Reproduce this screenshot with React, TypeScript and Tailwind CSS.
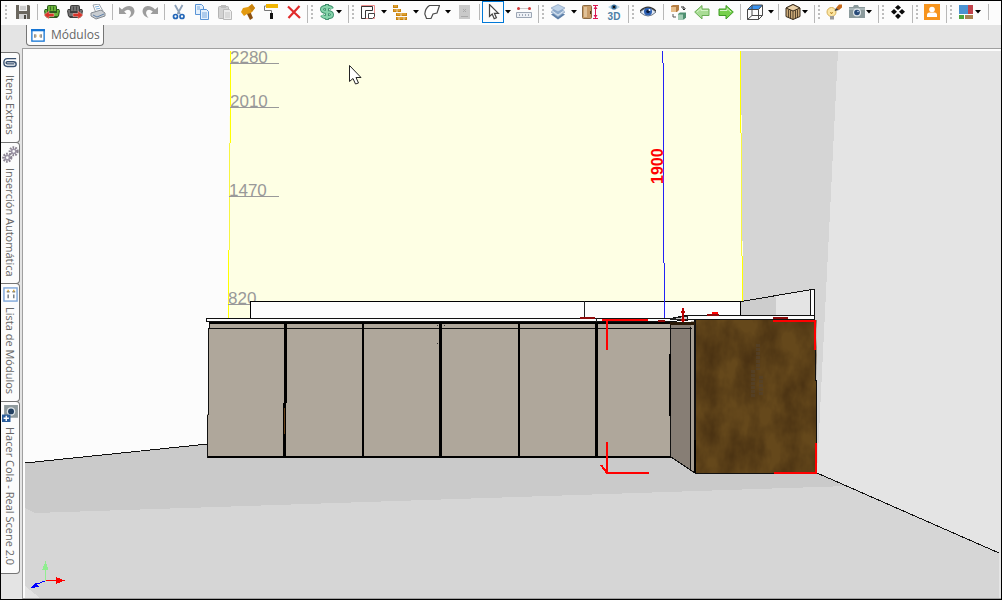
import React from 'react';

type IconProps = { size?: number; className?: string; children: React.ReactNode };

function Icon({ size = 16, className = '', children }: IconProps) {
  return (
    <svg width={size} height={size} viewBox="0 0 16 16" className={`shrink-0 ${className}`} fill="none" aria-hidden="true">
      {children}
    </svg>
  );
}

const SaveIcon = () => (
  <Icon>
    <path d="M1 1h13l1 1v13H1z" fill="#6b675f" />
    <path d="M4 1h8v6H4z" fill="#f2f2f2" />
    <path d="M5 3h6M5 5h6" stroke="#a8a8a8" />
    <path d="M4 10h8v5H4z" fill="#d4d4d4" />
    <path d="M9 11h2v4H9z" fill="#4c4943" />
  </Icon>
);

const SofaIcon = ({ color, dark, flip }: { color: string; dark: string; flip?: boolean }) => (
  <Icon>
    <path d="M3 3q0-2 2-2h6q2 0 2 2v2h2l1 2-1 5-2 2H3l-2-2-1-5 1-2h2z" fill={dark} />
    <path d="M4 3q0-1 1-1h6q1 0 1 1v4H4zM1 6h2v3h10V6h2l-1 6H2z" fill={color} />
    <path d="M6.500 2.500v4M9.500 2.500v4M4 8h8" stroke={dark} strokeWidth=".8" />
    <path
      d={flip ? 'M16 11 11 7v2.500H6v3h5V15z' : 'M0 11l5-4v2.500h5v3H5V15z'}
      fill="#d9342b"
      stroke="#f3c0bb"
      strokeWidth=".5"
    />
  </Icon>
);

const PrintIcon = () => (
  <Icon>
    <path d="M3 1l6-1 4 7-7 2z" fill="#fff" stroke="#9aa3ad" />
    <path d="M1 9l10-3 4 3v3l-9 3-5-3z" fill="#c9cdd1" stroke="#858b92" />
    <path d="M3 11l4 2 7-3" stroke="#5d7fa8" />
    <path d="M5 3l4-.7M6 5l4-.7" stroke="#7fb0dc" />
  </Icon>
);

const UndoIcon = ({ flip }: { flip?: boolean }) => (
  <Icon className={flip ? '-scale-x-100' : ''}>
    <path d="M0 3v7h7.500L5.200 7.600Q8.500 4.500 11 6.500q2.500 2.500-1.500 7.500 6-2 6-7Q15 2.500 10.500 2 6 1.800 3 5.500z" fill="#9d9d9d" />
  </Icon>
);

const CutIcon = () => (
  <Icon>
    <path d="M4 1l5 9M11.500 1 6.500 10" stroke="#8ca0b8" strokeWidth="1.8" />
    <circle cx="4.500" cy="12.500" r="2" stroke="#2467b8" strokeWidth="1.7" />
    <circle cx="11" cy="12.500" r="2" stroke="#2467b8" strokeWidth="1.7" />
  </Icon>
);

const CopyIcon = ({ line, fill }: { line: string; fill: string }) => (
  <Icon>
    <path d="M1.500.500h6l2 2v8h-8z" fill={fill} stroke={line} />
    <path d="M6.500 5.500h6l2 2v8h-8z" fill={fill} stroke={line} />
    <path d="M8 9h5M8 11h5M8 13h5M3 3h3M3 5h3" stroke={line} strokeWidth=".8" />
  </Icon>
);

const PasteIcon = () => (
  <Icon>
    <rect x="1.500" y="2.500" width="10" height="12" rx="1" fill="#d2d2d2" stroke="#b4b4b4" />
    <rect x="4" y="1" width="5" height="3" fill="#bcbcbc" />
    <path d="M6.500 5.500h6l2 2v8h-8z" fill="#ececec" stroke="#b9b9b9" />
    <path d="M8 9h5M8 11h5M8 13h5" stroke="#c6c6c6" />
  </Icon>
);

const HammerIcon = () => (
  <Icon>
    <path d="M6 8l4-1 3 7-3 2z" fill="#8a4f10" />
    <path d="M1 8l2-4 5-1 4-3 3 4-4 5-4 1-3 2z" fill="#e39a10" />
    <path d="M12 0l3 4-3 4-3-5z" fill="#c98310" />
  </Icon>
);

const RollerIcon = () => (
  <Icon>
    <rect x="3" y="0" width="12" height="4" fill="#f0b400" />
    <path d="M3 2H1.500v4.500h7V9" stroke="#777" />
    <rect x="7" y="9" width="3" height="6" fill="#111" />
  </Icon>
);

const DeleteIcon = () => (
  <Icon>
    <path d="M2 2.500l12 11.500M13.500 2 2.500 14" stroke="#e02b2b" strokeWidth="2.200" />
  </Icon>
);

const DollarIcon = () => (
  <Icon>
    <path
      d="M13 4.800Q12 2.800 8 2.800q-5 0-5 2.500Q3 8 8 8t5 2.700q0 2.500-5 2.500-4 0-5-2M8 0v16"
      stroke="#3b8f6a"
      strokeWidth="4"
    />
    <path
      d="M13 4.800Q12 2.800 8 2.800q-5 0-5 2.500Q3 8 8 8t5 2.700q0 2.500-5 2.500-4 0-5-2M8 1v14"
      stroke="#86d3ab"
      strokeWidth="2.200"
    />
  </Icon>
);

const WallsIcon = () => (
  <Icon>
    <path d="M1.500 1.500h13v13h-13z" stroke="#ef8f8f" />
    <path d="M1.500 14.500v-12h11v4h-7v8z" stroke="#333" />
    <path d="M8.500 14.500v-5h6v3l-2 2z" stroke="#444" fill="#fff" />
  </Icon>
);

const BricksIcon = () => (
  <Icon>
    <path d="M1 1h5v3H1zM1 5h8v3H1zM4 9h11v3H4zM4 13h11v3H4z" fill="#c8830c" />
    <path d="M2 2h3M2 6h2M6 6h2M5 10h3M10 10h4M5 14h1M8 14h3M13 14h1" stroke="#f1b955" />
    <path d="M5 5v3M9 9v3M7 13v3M12 13v3" stroke="#fff" strokeWidth=".8" />
  </Icon>
);

const ShapeIcon = () => (
  <Icon>
    <path d="M5.500 1.500h10L13 9l-4 1-2 4.500H2.500L.800 10q.500-6 4.700-8.500z" fill="#fff" stroke="#4a4a4a" strokeWidth="1.200" />
  </Icon>
);

const DisabledIcon = () => (
  <Icon>
    <rect x="3" y="1" width="11" height="14" fill="#c9c9c9" />
    <path d="M7 5l3 3M10 5 7 8M5 12.500h7" stroke="#a9a9a9" />
  </Icon>
);

const PointerIcon = () => (
  <Icon>
    <path d="M4.500.500v12l2.700-2.500 2 4.800 2.200-1-2-4.500h4z" fill="#fff" stroke="#444" strokeWidth="1.200" />
  </Icon>
);

const RulerIcon = () => (
  <Icon>
    <path d="M.500 8.500h15v5H.500z" fill="#eef1f6" stroke="#9ca6b4" />
    <path d="M3 11h1M6 11h1M9 11h1M12 11h1" stroke="#59677c" />
    <path d="M3 4.500h10" stroke="#c9c9c9" />
    <circle cx="2.500" cy="4.500" r="1.500" fill="#d23a3a" />
    <circle cx="13.500" cy="4.500" r="1.500" fill="#d23a3a" />
  </Icon>
);

const LayersIcon = () => (
  <Icon>
    <path d="M8 7l7 3.500L8 15.500l-7-5z" fill="#5d7fa8" />
    <path d="M8 5l7 3-7 5-7-5z" fill="#b5cbe3" stroke="#7894b5" strokeWidth=".6" />
    <path d="M8 3l7 3-7 5-7-5z" fill="#8eabcc" stroke="#fff" strokeWidth=".6" />
    <path d="M8 .500l7 3.500-7 4-7-4z" fill="#bdd2e8" stroke="#7894b5" strokeWidth=".6" />
  </Icon>
);

const DoorIcon = () => (
  <Icon>
    <rect x=".500" y="1.500" width="9" height="13" rx="1" fill="#c79b67" stroke="#896a43" />
    <path d="M2 3h3v10H2z" fill="#e0c197" />
    <path d="M8.500 7v3" stroke="#4c3516" />
    <path d="M11 1.500h5M11 14.500h5M13.500 1v14" stroke="#dd1852" />
    <path d="M11.500 5 13.500 2l2 3zM11.500 11l2 3 2-3z" fill="#dd1852" />
  </Icon>
);

const View3DIcon = () => (
  <svg width="16" height="18" viewBox="0 0 16 18" className="shrink-0" aria-hidden="true">
    <path d="M2 4q6-5 12 0-6 5-12 0z" fill="#b9d6e8" />
    <circle cx="8" cy="4" r="2.600" fill="#3a6f9c" />
    <circle cx="8" cy="4" r="1.200" fill="#111" />
    <text x="8" y="17" fontSize="10" fontWeight="bold" textAnchor="middle" fill="#4e7fa6" className="font-['Liberation_Sans',sans-serif]">
      3D
    </text>
  </svg>
);

const EyeIcon = () => (
  <Icon>
    <path d="M0 8q8-8 16 0-8 8-16 0z" fill="#dfe7f2" stroke="#6c7888" />
    <circle cx="8" cy="7.500" r="4" fill="#2d60b3" />
    <circle cx="8" cy="7.500" r="1.800" fill="#0b1c40" />
    <circle cx="9.500" cy="6" r="1" fill="#fff" />
    <path d="M0 7q8-8 16 0" stroke="#333" strokeWidth="1.200" />
  </Icon>
);

const SwapIcon = () => (
  <Icon>
    <path d="M1 2l2-1h6v5L7 8H1z" fill="#b57d42" />
    <path d="M1 3h5v5H1z" fill="#e6bd88" />
    <path d="M8 10l2-1.500h6v5L14 15.500H8z" fill="#4f8f72" />
    <path d="M8 10.500h5v5H8z" fill="#a2cdb4" />
    <path d="M11 3h3v3M12.500 4.500 14 6l1.500-1.500" stroke="#222" />
    <path d="M3 10v3h3" stroke="#555" />
  </Icon>
);

const ArrowIcon = ({ flip }: { flip?: boolean }) => (
  <Icon className={flip ? '-scale-x-100' : ''}>
    <path d="M.700 8 8 1.500v3.500h7v6.500H8V15z" fill={flip ? '#76d04c' : '#a9dc95'} stroke={flip ? '#3f9c25' : '#6aad55'} />
    <path d="M3 8l4-3.500v2h7" stroke="#d4f3c7" />
  </Icon>
);

const WireCubeIcon = () => (
  <Icon>
    <path d="M5 1h11l-4 4H1z" fill="#3a93f0" />
    <path d="M.500 5.500h11v10H.500zM11.500 5.500l4-4.500v10.500l-4 4M.500 5.500 5 1v10.500h10.500M5 11.500l-4.500 4M5 1h10.500" stroke="#4a4a4a" />
  </Icon>
);

const BoxIcon = () => (
  <Icon>
    <path d="M8 .500l7 3.500v8.500L8 15.500l-7-3V4z" fill="#c9a877" stroke="#3a2d1c" />
    <path d="M8 .500l7 3.500-7 3-7-3z" fill="#ead1a8" stroke="#3a2d1c" />
    <path d="M8 7v8.500M3.500 5.500v8M5.500 6.200v8M10.500 6.200v8M12.500 5.500v8" stroke="#3a2d1c" strokeWidth=".8" />
  </Icon>
);

const BulbIcon = () => (
  <Icon>
    <circle cx="5.500" cy="8" r="4.500" fill="#fbe5a4" stroke="#d5b059" />
    <path d="M4 12h4v3.500H4z" fill="#999" />
    <path d="M4.500 8l1 2 1-2" stroke="#b98522" />
    <path d="M10 4l3-3.500h3v3L13 6z" fill="#c5691b" />
    <path d="M8.500 7 10 4l3 2z" fill="#333" />
  </Icon>
);

const CameraIcon = () => (
  <Icon>
    <path d="M1 3h3l1-2h4l1 2h6v11H0V3z" fill="#8b9a9c" />
    <rect x="0" y="4" width="16" height="2" fill="#a9b6b8" />
    <circle cx="8" cy="8.500" r="4" fill="#dfe6ea" />
    <circle cx="8" cy="8.500" r="2.800" fill="#284a78" />
    <circle cx="9" cy="7.500" r=".8" fill="#c9ddf5" />
  </Icon>
);

const DiamondsIcon = () => (
  <Icon>
    <path
      d="M8 1l3 2.500L8 6 5 3.500zM4 5l3 2.700L4 10.500 1 7.700zM12 5l3 2.700-3 2.800-3-2.800zM8 9.500l3 2.500-3 3-3-3z"
      fill="#0a0a0a"
    />
  </Icon>
);

const UserIcon = () => (
  <Icon>
    <rect width="16" height="16" fill="#f7941d" />
    <circle cx="8" cy="5.500" r="2.800" fill="#fff" />
    <path d="M3 13V11q0-2.500 2.500-2.500h5Q13 8.500 13 11v2z" fill="#fff" />
  </Icon>
);

const PaletteIcon = () => (
  <Icon>
    <rect x="1" y="1" width="9" height="9" fill="#4b93d1" />
    <rect x="10" y="1" width="5" height="9" fill="#c2434c" />
    <rect x="1" y="11" width="5" height="4" fill="#4ba53c" />
    <rect x="7" y="11" width="8" height="4" fill="#a98150" />
  </Icon>
);

const ClipIcon = () => (
  <Icon size={14}>
    <path d="M15 3H5Q1 3 1 7.500T5 12h7q3 0 3-2.700T12 6.500H5q-1.500 0-1.500 1.200T5 9h8" stroke="#38506f" strokeWidth="1.600" />
  </Icon>
);

const GearsIcon = () => (
  <Icon size={17}>
    <circle cx="11" cy="5" r="3.500" stroke="#8c8592" strokeWidth="2.500" strokeDasharray="1.500 1" />
    <circle cx="11" cy="5" r="2" stroke="#9d95a6" strokeWidth="1.500" />
    <circle cx="5" cy="11" r="3.500" stroke="#8c8592" strokeWidth="2.500" strokeDasharray="1.500 1" />
    <circle cx="5" cy="11" r="2" stroke="#9d95a6" strokeWidth="1.500" />
  </Icon>
);

const ListIcon = () => (
  <Icon size={15}>
    <rect x="1" y="1" width="14" height="14" fill="#fff" stroke="#7ea6d8" strokeWidth="1.500" />
    <path d="M4 5h3M10 5h3M5.500 8v4M11.500 8v4" stroke="#6f7780" strokeWidth="1.500" />
    <path d="M5.500 3v2M11.500 3v2" stroke="#d8a93a" strokeWidth="1.500" />
  </Icon>
);

const QueueIcon = () => (
  <Icon size={17}>
    <path d="M2 0h13v12H2z" fill="#8f9a9d" />
    <circle cx="8.500" cy="6" r="4" fill="#dfe6ea" />
    <circle cx="8.500" cy="6" r="2.800" fill="#223f60" />
    <rect x="0" y="9" width="8" height="7" fill="#2b5d9b" />
    <path d="M4 10v5M1.500 12.500h5" stroke="#fff" strokeWidth="1.300" />
  </Icon>
);

const ModulesIcon = () => (
  <Icon size={14}>
    <rect x="1" y="2" width="14" height="13" fill="#fff" stroke="#1474d4" strokeWidth="1.500" />
    <path d="M0 2.500h16" stroke="#1474d4" strokeWidth="2.500" />
    <path d="M4.500 7v4M11.500 7v4" stroke="#666" strokeWidth="1.500" />
    <path d="M6 7.500v3M10 7.500v3" stroke="#e0bd78" />
  </Icon>
);

function Caret() {
  return (
    <svg width="8" height="4" viewBox="0 0 8 4" className="shrink-0" aria-hidden="true">
      <path d="M1 0h6L4 3.500z" fill="#000" />
    </svg>
  );
}

function Tool({ label, children }: { label: string; children: React.ReactNode }) {
  return (
    <button type="button" aria-label={label} className="flex h-[22px] w-6 shrink-0 items-center justify-center">
      {children}
    </button>
  );
}

function SmallTool({ label, children }: { label: string; children: React.ReactNode }) {
  return (
    <button type="button" aria-label={label} className="flex h-[22px] w-[23px] shrink-0 items-center justify-center">
      {children}
    </button>
  );
}

// icon with a drop-down arrow; the tight one keeps the arrow against the icon
function MenuTool({ label, tight, children }: { label: string; tight?: boolean; children: React.ReactNode }) {
  return (
    <button type="button" aria-label={label} className={`flex h-[22px] shrink-0 items-center ${tight ? 'w-[31px]' : 'w-8'}`}>
      <span className={tight ? 'flex w-5 justify-end' : 'flex w-6 justify-center'}>{children}</span>
      <Caret />
    </button>
  );
}

function Separator() {
  return (
    <div className="flex h-[22px] w-[6px] shrink-0 items-center justify-center">
      <div className="h-4 w-px bg-[#b8b8b8]" />
    </div>
  );
}

function Grip() {
  return (
    <div className="flex w-[3px] flex-col gap-[2px]">
      <i className="size-[2px] bg-[#bdbdbd]" />
      <i className="size-[2px] bg-[#bdbdbd]" />
      <i className="size-[2px] bg-[#bdbdbd]" />
      <i className="size-[2px] bg-[#bdbdbd]" />
    </div>
  );
}

function GroupBreak() {
  return (
    <div className="flex h-[22px] w-[10px] shrink-0 items-center justify-center gap-[3px]">
      <div className="h-[18px] w-px self-end bg-[#b8b8b8]" />
      <Grip />
    </div>
  );
}

function Toolbar() {
  return (
    <div role="toolbar" className="flex h-6 shrink-0 items-start overflow-hidden bg-[#fcfcfc]">
      <div className="flex h-[22px] w-[10px] shrink-0 items-center justify-center"><Grip /></div>
      <SmallTool label="Guardar"><SaveIcon /></SmallTool>
      <Separator />
      <SmallTool label="Importar"><SofaIcon color="#6bb53a" dark="#2d5c1e" /></SmallTool>
      <SmallTool label="Exportar"><SofaIcon color="#747474" dark="#3f3f3f" flip /></SmallTool>
      <SmallTool label="Imprimir"><PrintIcon /></SmallTool>
      <Separator />
      <SmallTool label="Deshacer"><UndoIcon /></SmallTool>
      <SmallTool label="Rehacer"><UndoIcon flip /></SmallTool>
      <Separator />
      <SmallTool label="Cortar"><CutIcon /></SmallTool>
      <SmallTool label="Copiar"><CopyIcon line="#5a94d6" fill="#e4f0fc" /></SmallTool>
      <SmallTool label="Pegar"><PasteIcon /></SmallTool>
      <SmallTool label="Construir"><HammerIcon /></SmallTool>
      <SmallTool label="Pintar"><RollerIcon /></SmallTool>
      <SmallTool label="Eliminar"><DeleteIcon /></SmallTool>
      <GroupBreak />
      <MenuTool label="Presupuesto" tight><DollarIcon /></MenuTool>
      <GroupBreak />
      <MenuTool label="Paredes"><WallsIcon /></MenuTool>
      <MenuTool label="Ladrillos"><BricksIcon /></MenuTool>
      <MenuTool label="Forma"><ShapeIcon /></MenuTool>
      <Tool label="Puerta"><DisabledIcon /></Tool>
      <Separator />
      <button type="button" aria-label="Seleccionar" aria-pressed="true" className="flex h-[22px] shrink-0 items-center">
        <span className="flex size-[22px] items-center justify-center border border-[#0078d7]"><PointerIcon /></span>
        <Caret />
      </button>
      <Tool label="Medir"><RulerIcon /></Tool>
      <GroupBreak />
      <MenuTool label="Capas"><LayersIcon /></MenuTool>
      <Tool label="Altura"><DoorIcon /></Tool>
      <Tool label="Vista 3D"><View3DIcon /></Tool>
      <GroupBreak />
      <Tool label="Ver"><EyeIcon /></Tool>
      <Separator />
      <Tool label="Sustituir"><SwapIcon /></Tool>
      <Tool label="Anterior"><ArrowIcon /></Tool>
      <SmallTool label="Siguiente"><ArrowIcon flip /></SmallTool>
      <Separator />
      <MenuTool label="Perspectiva"><WireCubeIcon /></MenuTool>
      <Separator />
      <MenuTool label="Caja" tight><BoxIcon /></MenuTool>
      <GroupBreak />
      <SmallTool label="Luz"><BulbIcon /></SmallTool>
      <MenuTool label="Cámara" tight><CameraIcon /></MenuTool>
      <GroupBreak />
      <Tool label="Alinear"><DiamondsIcon /></Tool>
      <GroupBreak />
      <Tool label="Usuario"><UserIcon /></Tool>
      <GroupBreak />
      <MenuTool label="Materiales" tight><PaletteIcon /></MenuTool>
      <Separator />
    </div>
  );
}

const sideTabs = [
  { label: 'Itens Extras', icon: <ClipIcon /> },
  { label: 'Inserción Automática', icon: <GearsIcon /> },
  { label: 'Lista de Módulos', icon: <ListIcon /> },
  { label: 'Hacer Cola - Real Scene 2.0', icon: <QueueIcon /> },
];

function Sidebar() {
  return (
    <nav className="flex w-[21px] shrink-0 flex-col items-start pt-[27px] text-[11px]">
      {sideTabs.map((tab) => (
        <button
          key={tab.label}
          type="button"
          className="-mb-px flex w-[19px] flex-col items-center gap-[5px] rounded-r-[4px] border border-l-0 border-[#757575] bg-[#fcfcfc] pt-[3px] pb-[7px]"
        >
          {tab.icon}
          <span className="whitespace-nowrap leading-4 [writing-mode:vertical-rl]">{tab.label}</span>
        </button>
      ))}
    </nav>
  );
}

const levels = [
  { label: '2280', y: 63, x: 230, end: 279 },
  { label: '2010', y: 107, x: 230, end: 279 },
  { label: '1470', y: 196, x: 229, end: 279 },
  { label: '820', y: 304, x: 228, end: 250 },
];

function Scene() {
  return (
    <svg
      viewBox="25 51 974 547"
      preserveAspectRatio="xMinYMin slice"
      className="absolute inset-0 size-full overflow-visible"
      shapeRendering="crispEdges"
      fill="none"
      role="img"
      aria-label="Vista 3D"
    >
      <defs>
        <filter id="wood" x="0" y="0" width="1" height="1" colorInterpolationFilters="sRGB">
          <feTurbulence type="fractalNoise" baseFrequency="0.05 0.03" numOctaves="4" seed="12" />
          <feColorMatrix values="0 0 0 0 0.26  0 0 0 0 0.17  0 0 0 0 0.06  1.4 0 0 0 -0.4" />
        </filter>
      </defs>

      {/* walls and floor */}
      <path d="M25 51h974v547H25z" fill="#fcfcfc" />
      <path d="M741 51h97L820 475h-79z" fill="#d5d5d5" />
      <path d="M838 51h161v502L817 473z" fill="#e4e4e4" />
      <path d="M25 463 208 444v13h463l24 16h122l182 80v45H25z" fill="#d6d6d6" />
      <path d="M25 463 208 444v13h463l24 16h122l31 13L35 513l-10-5z" fill="#cacaca" />
      <path d="M25 586l15 12H25z" fill="#e4e4e4" />
      <path d="M25 463 208 444M817 473l182 80" stroke="#111" />

      {/* back panel with the height marks */}
      <path d="M230 51h511l2 250v18H228z" fill="#feffe4" />
      <path d="M230.500 51v92M228.500 250v68M740.500 51v82M742.500 256v45" stroke="#ff0" />
      <path d="M229.500 143v107M741.500 133v123" stroke="#f7f540" />
      {levels.map((l) => (
        <g key={l.label}>
          <text x={l.x} y={l.y} fontSize="17" fill="#999" className="font-['Liberation_Sans',Arial,sans-serif]">{l.label}</text>
          <path d={`M${l.x} ${l.y + 0.5}H${l.end}`} stroke="#999" />
        </g>
      ))}

      {/* splashback */}
      <path d="M250.500 318v-16.500h490V318z" fill="#fcfcfc" stroke="#000" />
      <path d="M584.500 301v18" stroke="#222" />
      <path d="M741 302l35-6v20h-35z" fill="#cdcdcd" />
      <path d="M776 296l35-6v26h-35z" fill="#e4e4e4" />
      <path d="M810.500 289.500h4V318h-4z" fill="#fcfcfc" stroke="#111" />
      <path d="M741 301.500 812 289.500" stroke="#111" />

      {/* cabinet fronts */}
      <path d="M209 323h462v134H207.500v-42l1-87z" fill="#afa79b" />
      <path d="M209.500 323v6M208.500 328v87M207.500 415v43M208 328.500h462M670.500 322v135" stroke="#111" />
      <path d="M209 322.500h486M208 457h464" stroke="#000" strokeWidth="2" />
      <path d="M285.500 323v80M284.500 403v54M440.500 323v134M596.500 323v134" stroke="#000" strokeWidth="3" />
      <path d="M363 323v134M519 323v134M670 354v62" stroke="#000" strokeWidth="2" />
      <path d="M284.500 408v26" stroke="#6b441a" />
      <path d="M437 325h1M444 325h1M437 343h1" stroke="#333" />

      {/* return side and end panel */}
      <path d="M671 323h20v148l-20-14z" fill="#877e75" />
      <path d="M691 321h4v151h-4z" fill="#a79f94" />
      <path d="M671 457l24 16M690.500 327v144M694.500 320v153M670 329l8-1h14" stroke="#111" />
      <path d="M695 320h120.500v60l1 93H695z" fill="#65481b" />
      <path d="M695 320h120.500v60l1 93H695z" filter="url(#wood)" fill="#000" />
      <path d="M757.500 344v26M752.500 370v28M760.500 376v20" stroke="#53422f" strokeWidth="4" strokeDasharray="3 1" opacity=".6" />
      <path d="M695 320v153h121.500v-93h-1v-60" stroke="#111" />
      <path d="M695 440v33" stroke="#000" strokeWidth="2" />

      {/* worktop */}
      <path d="M206.500 318.500H670l17-3h127.500v4H694l-22 2H206.500z" fill="#fcfcfc" stroke="#111" />
      <path d="M596.500 318v4M670 319l17-3v3z" fill="#ccc" stroke="#222" />
      <path d="M670 323h25" stroke="#2a1a08" strokeWidth="3" />

      {/* dimension line */}
      <path d="M662.500 51v12M663.500 63v200M664.500 263v55" stroke="#2222f5" />
      <text
        transform="translate(663 184) rotate(-90)"
        fontSize="16"
        fontWeight="bold"
        fill="#f00"
        className="font-['Liberation_Sans',Arial,sans-serif]"
      >
        1900
      </text>

      {/* selection marks */}
      <path d="M580 318h15M658 321h7M707 314.500h12M773 318h15" stroke="#8f0a0a" strokeWidth="2" />
      <path d="M602 320h46M607 320v30M607 442v31h42M601 465l6 8M773 320.500h42v29M774 472.500h42v-30M712 313h6" stroke="#f00" strokeWidth="2" />
      <path d="M683 308v14M681 312h4M681 320h4" stroke="#b00" strokeWidth="2" />

      {/* axes */}
      <path d="M45.500 581v-12" stroke="#90ee90" />
      <path d="M42 570l3.500-9 3 9z" fill="#90ee90" />
      <path d="M46 580.500h12" stroke="#f00" />
      <path d="M56 577l9 3.500-9 3.500z" fill="#f00" />
      <path d="M45 581l-8 3" stroke="#00f" />
      <path d="M31 588l5-6 3 5z" fill="#00f" />

      {/* mouse pointer */}
      <path
        d="M349.500 65.500v16l3.500-3 2.500 5.500 3-1-2.500-5.500h5z"
        fill="#fff"
        stroke="#222"
        shapeRendering="geometricPrecision"
      />
    </svg>
  );
}

export default function App() {
  return (
    <div className="flex h-screen flex-col overflow-hidden border border-black bg-[#e4e4e4] font-['Open_Sans','Noto_Sans',sans-serif] text-xs text-[#666]">
      <Toolbar />
      <div className="flex min-h-0 flex-1">
        <Sidebar />
        <main className="flex min-w-0 flex-1 flex-col">
          <div className="flex h-[23px] shrink-0 items-start pl-1">
            <button
              type="button"
              className="flex h-[21px] items-center gap-[6px] rounded-b-[4px] border border-t-0 border-[#757575] bg-[#fcfcfc] pr-[3px] pl-1"
            >
              <ModulesIcon />
              <span className="leading-4">Módulos</span>
            </button>
          </div>
          <div className="flex min-h-0 flex-1 border-t border-b border-l border-[#a0a0a0] bg-[#fcfcfc] pt-[2px] pl-[2px]">
            <div className="relative min-w-0 flex-1">
              <Scene />
            </div>
            <div className="w-[2px] bg-[#e4e4e4]" />
          </div>
        </main>
      </div>
    </div>
  );
}
